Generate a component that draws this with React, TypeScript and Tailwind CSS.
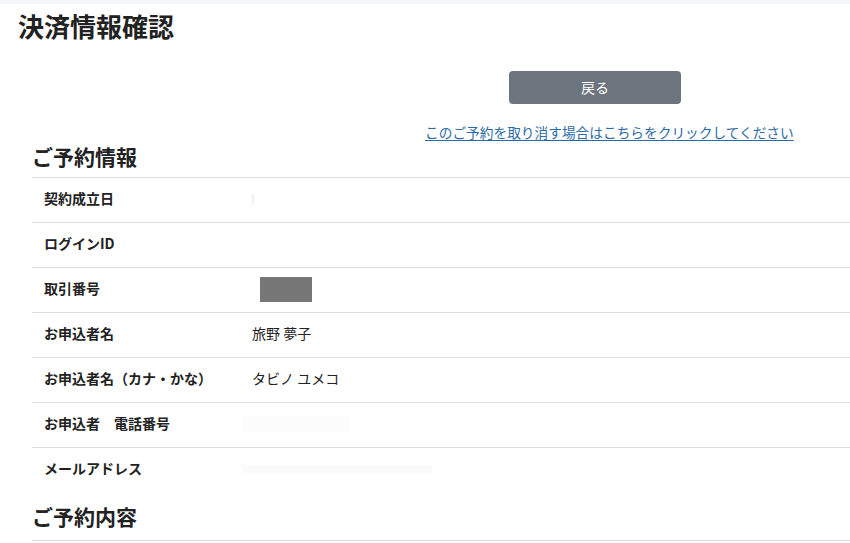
import React from "react";

const rows: { label: string; value?: React.ReactNode }[] = [
  { label: "契約成立日", value: <span className="inline-block w-[2px] h-[10px] bg-[#f0f0f0]" /> },
  { label: "ログインID" },
  { label: "取引番号", value: <span className="inline-block w-[52px] h-[25px] bg-[#777777] ml-[8px] mt-[2px]" /> },
  { label: "お申込者名", value: "旅野 夢子" },
  { label: "お申込者名（カナ・かな）", value: "タビノ ユメコ" },
  { label: "お申込者　電話番号", value: <span className="inline-block w-[108px] h-[16px] bg-[#fcfcfc] -ml-[10px]" /> },
  { label: "メールアドレス", value: <span className="inline-block w-[190px] h-[8px] bg-[#fafafa] -ml-[10px]" /> },
];

export default function App() {
  return (
    <div
      className="w-[850px] h-[543px] overflow-hidden bg-white text-[#222]"
      style={{ fontFamily: '"Noto Sans CJK JP", "Noto Sans", sans-serif' }}
    >
      <div className="h-[4px] bg-[#f5f6f8]" />
      <h1 className="pl-[18px] mt-[6px] h-[32px] text-[26px] font-bold leading-[32px] text-[#222]">決済情報確認</h1>
      <div className="flex flex-col">
        <div className="pl-[509px] mt-[29px]">
          <button className="w-[172px] h-[33px] rounded-[4px] bg-[#6c757d] text-white text-[14px] leading-[33px] text-center">
            戻る
          </button>
        </div>
        <div className="pl-[425px] mt-[17px] leading-[20px]">
          <a className="text-[13.7px] text-[#2b6aa6] underline underline-offset-[2px]" href="#">
            このご予約を取り消す場合はこちらをクリックしてください
          </a>
        </div>
      </div>
      <div className="ml-[32px]">
        <h2 className="text-[21px] font-bold leading-[30px] h-[35px] -mt-[1px] pb-[1px] box-content text-[#222]">ご予約情報</h2>
        <div className="flex flex-col">
          {rows.map((r) => (
            <div key={r.label} className="flex items-center h-[45px] pb-[3px] border-t border-[#dddddd]">
              <div className="w-[220px] pl-[12px] text-[14px] font-bold">{r.label}</div>
              <div className="text-[14px] flex items-center">{r.value}</div>
            </div>
          ))}
        </div>
        <h2 className="text-[21px] font-bold leading-[30px] mt-[9px] h-[39px] text-[#222]">ご予約内容</h2>
        <div className="border-t border-[#dddddd]" />
      </div>
    </div>
  );
}
